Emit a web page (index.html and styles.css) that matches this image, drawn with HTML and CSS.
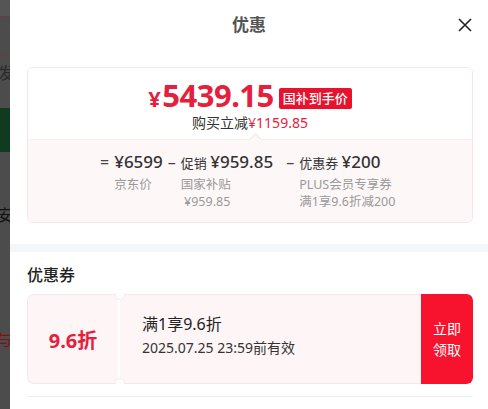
FILE: index.html
```html
<!DOCTYPE html>
<html lang="zh-CN">
<head>
  <meta charset="UTF-8">
  <meta name="viewport" content="width=device-width, initial-scale=1.0">
  <title>优惠</title>
  <link rel="stylesheet" href="styles.css">
</head>
<body>
  <div class="page">
    <!-- page behind the sheet, dimmed -->
    <div class="backdrop">
      <div class="bd-block bd-a"></div>
      <div class="bd-block bd-b"></div>
      <div class="bd-block bd-c"><span>发货</span></div>
      <div class="bd-block bd-green"></div>
      <div class="bd-block bd-d"><span class="dark">安装</span></div>
      <div class="bd-block bd-e"><span class="red">与</span></div>
    </div>

    <div class="sheet">
      <div class="sheet-head">
        <h2>优惠</h2>
        <button class="close" aria-label="关闭">
          <svg width="16" height="16" viewBox="0 0 16 16">
            <path d="M2 2 L14 14 M14 2 L2 14" stroke="#222" stroke-width="1.6" fill="none" />
          </svg>
        </button>
      </div>

      <div class="price-card">
        <div class="price-main">
          <div class="price-line">
            <span class="price"><small>¥</small>5439.15</span>
            <span class="tag">国补到手价</span>
          </div>
          <div class="save">购买立减<em>¥1159.85</em></div>
        </div>
        <div class="price-calc">
          <div class="calc-item">
            <span class="op">=</span>
            <div class="calc-body">
              <div class="calc-val"><b>¥6599</b></div>
              <div class="calc-label">京东价</div>
            </div>
          </div>
          <div class="calc-item">
            <span class="op">–</span>
            <div class="calc-body">
              <div class="calc-val">促销 <b>¥959.85</b></div>
              <div class="calc-label">国家补贴<br>&nbsp;¥959.85</div>
            </div>
          </div>
          <div class="calc-item">
            <span class="op">–</span>
            <div class="calc-body">
              <div class="calc-val">优惠券 <b>¥200</b></div>
              <div class="calc-label">PLUS会员专享券<br>满1享9.6折减200</div>
            </div>
          </div>
        </div>
      </div>

      <div class="gap-band"></div>

      <div class="coupons">
        <h3>优惠券</h3>
        <div class="coupon">
          <div class="coupon-rate">9.6折</div>
          <div class="coupon-info">
            <div class="coupon-title">满1享9.6折</div>
            <div class="coupon-date">2025.07.25 23:59前有效</div>
          </div>
          <button class="coupon-btn">立即<br>领取</button>
        </div>
        <div class="coupons-end"></div>
      </div>
    </div>
  </div>
</body>
</html>
```

FILE: styles.css
```css
* {
  box-sizing: border-box;
}

body, html {
  margin: 0;
  padding: 0;
  height: 100%;
  font-family: "Noto Sans", "Noto Sans CJK SC", sans-serif;
  background: #fff;
  color: #222;
}

.page {
  display: flex;
  height: 409px;
  overflow: hidden;
}

/* dimmed page on the left */
.backdrop {
  width: 10px;
  flex-shrink: 0;
  background: #4c4c4c;
  overflow: hidden;
}

.bd-block {
  white-space: nowrap;
  font-size: 16px;
  line-height: 1;
  color: #2a2a2a;
  overflow: hidden;
}

.bd-a {
  height: 17px;
  background: #555;
  border-bottom: 1px solid #6e3a3c;
}

.bd-b {
  height: 38px;
  border-bottom: 1px solid #6e3a3c;
}

.bd-c {
  height: 53px;
  padding-top: 10px;
  text-indent: -2px;
}

.bd-green {
  height: 44px;
  background: #103b1e;
}

.bd-d {
  height: 180px;
  padding-top: 55px;
  text-indent: -3px;
}

.bd-e {
  height: 30px;
  text-indent: -4px;
}

.dark {
  color: #111;
}

.red {
  color: #7c1212;
}

.sheet {
  flex: 1;
  background: #fff;
}

.sheet-head {
  position: relative;
  height: 50px;
  display: flex;
  align-items: center;
  justify-content: center;
}

.sheet-head h2 {
  margin: 0 0 3px;
  font-size: 17px;
  font-weight: 700;
  color: #555;
}

.close {
  position: absolute;
  right: 15px;
  top: 17px;
  border: none;
  background: none;
  padding: 0;
  width: 16px;
  height: 16px;
  cursor: pointer;
}

.price-card {
  margin: 17px 15px 0 17px;
  border: 1px solid #f6e4e7;
  border-radius: 6px;
  overflow: hidden;
}

.price-main {
  height: 71px;
  padding-top: 11px;
  text-align: center;
  background: #fff;
}

.price-line {
  display: flex;
  justify-content: center;
  align-items: center;
  gap: 5px;
  height: 35px;
}

.price {
  font-size: 31px;
  font-weight: 700;
  color: #e4203c;
  letter-spacing: -0.5px;
  line-height: 35px;
}

.price small {
  font-size: 22px;
  margin-right: 2px;
}

.tag {
  background: #e8122e;
  color: #fff;
  font-size: 13px;
  font-weight: 500;
  padding: 2px 4px;
  border-radius: 2px;
  line-height: 17px;
  margin-top: 3px;
}

.save {
  font-size: 14px;
  color: #333;
  line-height: 18px;
}

.save em {
  font-style: normal;
  color: #e4203c;
}

.price-calc {
  position: relative;
  height: 83px;
  background: #fdf7f8;
  border-top: 1px solid #f8eef0;
  display: flex;
  padding: 10px 0 0 72px;
}

/* little tab on the divider */
.price-calc::before {
  content: "";
  position: absolute;
  left: 223px;
  top: -5px;
  width: 8px;
  height: 8px;
  background: #fdf7f8;
  border-top: 1px solid #f3e6e8;
  border-left: 1px solid #f3e6e8;
  transform: rotate(45deg);
}

.calc-item {
  display: flex;
  align-items: flex-start;
  margin-right: 5px;
}

.calc-item:last-child {
  margin-left: 8px;
}

.op {
  font-size: 16px;
  color: #444;
  line-height: 24px;
  margin-right: 5px;
}

.calc-val {
  font-size: 13px;
  color: #333;
  line-height: 24px;
}

.calc-val b {
  font-size: 17px;
  font-weight: 500;
}

.calc-label {
  font-size: 12.5px;
  color: #999;
  line-height: 17px;
  margin-top: 1px;
}

.gap-band {
  height: 8px;
  background: #f5f6f8;
  margin-top: 21px;
}

.coupons {
  padding: 12px 15px 0 17px;
}

.coupons h3 {
  margin: 0;
  font-size: 16px;
  font-weight: 500;
  color: #222;
  line-height: 22px;
}

.coupon {
  margin-top: 8px;
  height: 90px;
  display: flex;
  border-radius: 6px;
  overflow: hidden;
}

.coupon-rate {
  width: 91px;
  background: #fdf5f6;
  border: 1px solid #f8e7ea;
  border-right: none;
  border-radius: 6px 0 0 6px;
  display: flex;
  align-items: center;
  justify-content: center;
  font-size: 20px;
  font-weight: 700;
  color: #e4203c;
}

.coupon-info {
  position: relative;
  flex: 1;
  background: #fdf5f6;
  border: 1px solid #f8e7ea;
  border-left: 2px solid #fff;
  border-right: none;
  padding: 18px 0 0 22px;
}

/* notches on the tear line */
.coupon-info::before,
.coupon-info::after {
  content: "";
  position: absolute;
  left: -5px;
  width: 8px;
  height: 8px;
  border-radius: 50%;
  background: #fff;
  border: 1px solid #f8e7ea;
}

.coupon-info::before {
  top: -5px;
}

.coupon-info::after {
  bottom: -5px;
}

.coupon-title {
  font-size: 16px;
  color: #222;
  line-height: 22px;
}

.coupon-date {
  font-size: 14px;
  color: #333;
  line-height: 20px;
  margin-top: 3px;
}

.coupon-btn {
  width: 52px;
  border: none;
  background: #f7132d;
  color: #fff;
  font-family: inherit;
  font-size: 14px;
  line-height: 21px;
  border-radius: 0 6px 6px 0;
  padding: 0;
  cursor: pointer;
}

.coupons-end {
  margin-top: 12px;
  border-top: 1px solid #eee;
}
```
